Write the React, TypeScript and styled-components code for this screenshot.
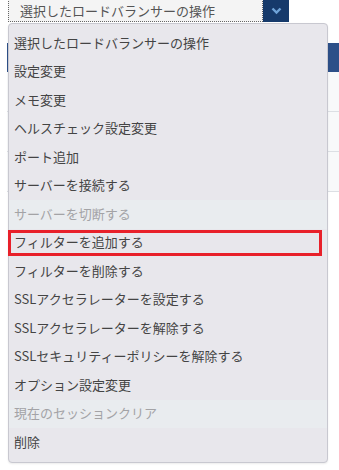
import styled, { createGlobalStyle } from 'styled-components'

const GlobalStyle = createGlobalStyle`
    html, body {
        margin: 0;
        padding: 0;
        background: #ffffff;
        font-family: "Noto Sans CJK JP", "Noto Sans", sans-serif;
    }
`

const Page = styled.div`
    position: relative;
    width: 339px;
    height: 470px;
    overflow: hidden;
`

const SelectRow = styled.div`
    display: flex;
    width: 281px;
    height: 26px;
    margin: -4px 0 0 8px;
`

const SelectBox = styled.div`
    flex: 1;
    box-sizing: border-box;
    display: flex;
    align-items: center;
    padding: 2px 0 0 11px;
    background: #f4f4f4;
    border: 1px dotted #666;
    color: #555;
    font-size: 13px;
`

const SelectButton = styled.div`
    width: 26px;
    display: flex;
    align-items: center;
    justify-content: center;
    padding-top: 4px;
    box-sizing: border-box;
    background: #163a6b;
    color: #6fa3d8;
`

const Table = styled.div`
    margin: 21px 0 0 7px;
    display: flex;
    flex-direction: column;
`

const TableHead = styled.div`
    height: 29px;
    background: #2d5088;
`

const TableRow = styled.div`
    height: 39px;
    background: #f8f9fa;
    border-bottom: 1px solid #dcdfe4;
`

const Menu = styled.ul`
    position: absolute;
    top: 23px;
    left: 8px;
    width: 320px;
    box-sizing: border-box;
    margin: 0;
    padding: 5px 0;
    list-style: none;
    background: #e8e7ec;
    border: 1px solid #c8c8d0;
    border-radius: 4px;
    box-shadow: 0 1px 2px rgba(0, 0, 0, 0.08);
`

const MenuItem = styled.li<{ $disabled?: boolean; $marked?: boolean }>`
    position: relative;
    height: 28.5px;
    box-sizing: border-box;
    display: flex;
    align-items: center;
    padding: 0 0 2px 5px;
    font-size: 13px;
    line-height: 1;
    color: ${({ $disabled }) => ($disabled ? '#a3a3a6' : '#444')};
    background: ${({ $disabled }) => ($disabled ? '#e9ecef' : 'transparent')};

    ${({ $marked }) =>
        $marked &&
        `
        &::after {
            content: "";
            position: absolute;
            top: 1px;
            bottom: 1px;
            left: -1px;
            right: 5px;
            border: 3px solid #e8202a;
        }
    `}
`

const items: { label: string; disabled?: boolean; marked?: boolean }[] = [
    { label: '選択したロードバランサーの操作' },
    { label: '設定変更' },
    { label: 'メモ変更' },
    { label: 'ヘルスチェック設定変更' },
    { label: 'ポート追加' },
    { label: 'サーバーを接続する' },
    { label: 'サーバーを切断する', disabled: true },
    { label: 'フィルターを追加する', marked: true },
    { label: 'フィルターを削除する' },
    { label: 'SSLアクセラレーターを設定する' },
    { label: 'SSLアクセラレーターを解除する' },
    { label: 'SSLセキュリティーポリシーを解除する' },
    { label: 'オプション設定変更' },
    { label: '現在のセッションクリア', disabled: true },
    { label: '削除' },
]

export default function App() {
    return (
        <Page>
            <GlobalStyle />
            <SelectRow>
                <SelectBox>選択したロードバランサーの操作</SelectBox>
                <SelectButton>
                    <svg width="11" height="8" viewBox="0 0 11 8">
                        <path d="M1.5 1.5 L5.5 5.5 L9.5 1.5" fill="none" stroke="currentColor" strokeWidth="2.4" />
                    </svg>
                </SelectButton>
            </SelectRow>
            <Table>
                <TableHead />
                <TableRow />
                <TableRow />
                <TableRow />
            </Table>
            <Menu>
                {items.map((item) => (
                    <MenuItem key={item.label} $disabled={item.disabled} $marked={item.marked}>
                        {item.label}
                    </MenuItem>
                ))}
            </Menu>
        </Page>
    )
}
